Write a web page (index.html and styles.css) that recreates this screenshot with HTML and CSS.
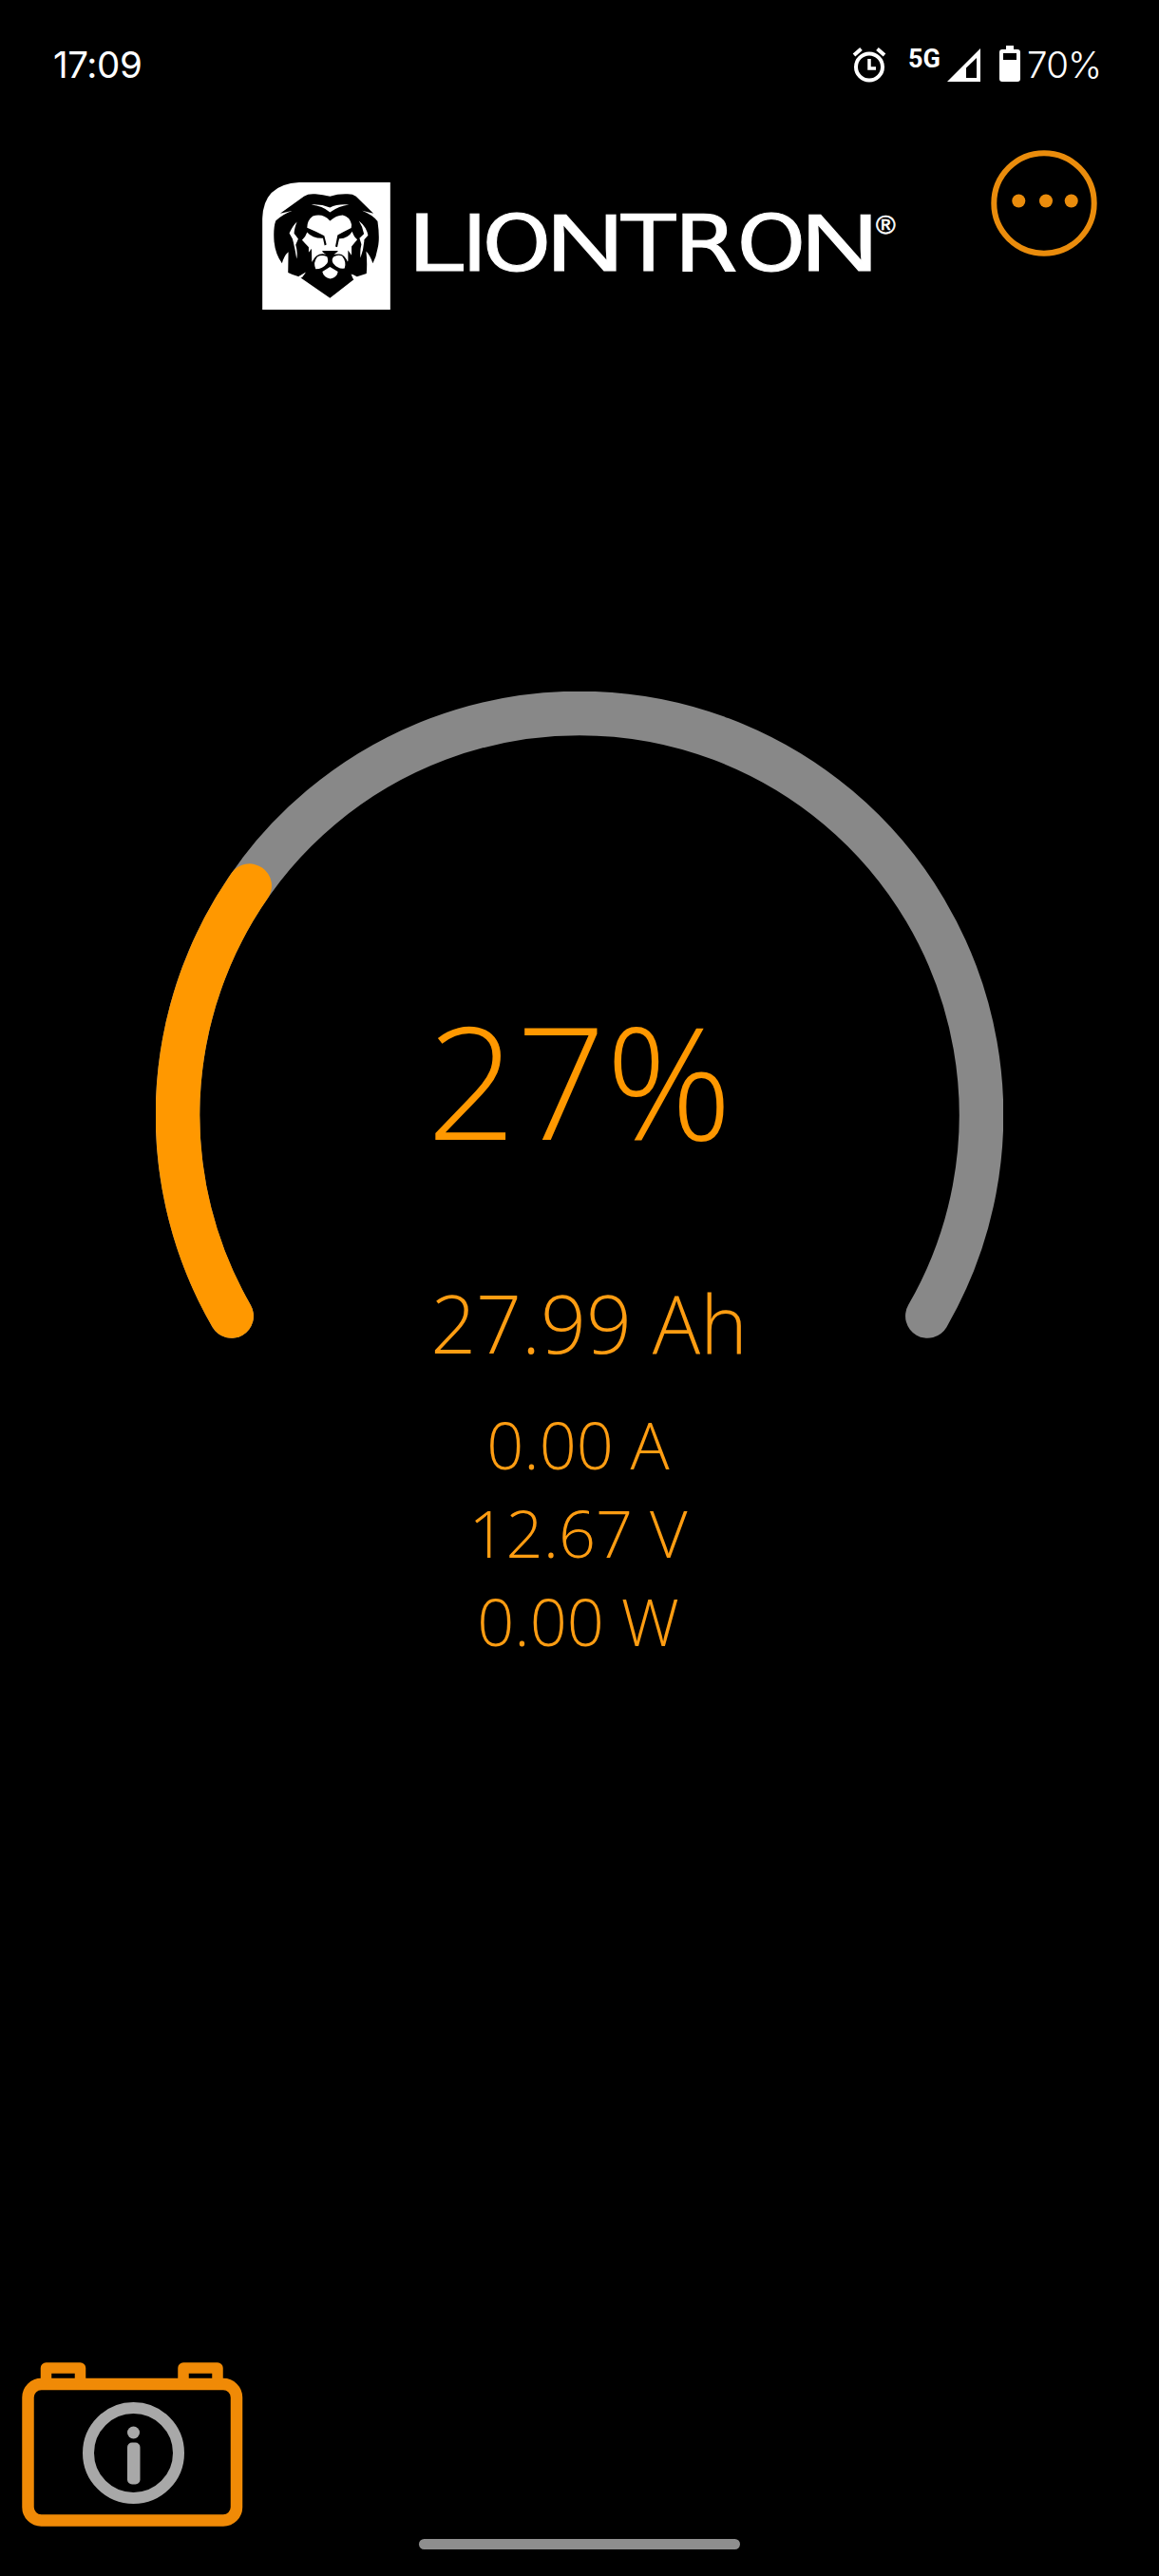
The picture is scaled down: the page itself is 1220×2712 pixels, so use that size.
FILE: index.html
```html
<!DOCTYPE html>
<html lang="en">
<head>
    <meta charset="UTF-8">
    <title>LIONTRON</title>
    <link rel="stylesheet" href="styles.css">
</head>
<body>
<div class="app">
    <div class="status">
        <span class="time">17:09</span>
        <div class="status-icons">
            <svg class="alarm" width="36" height="38" viewBox="0 0 36 38">
                <circle cx="18" cy="21.5" r="14" fill="none" stroke="#fff" stroke-width="4"/>
                <path d="M2 9L9.5 2.500M34 9L26.500 2.500" stroke="#fff" stroke-width="4"/>
                <path d="M18 13v10h7" fill="none" stroke="#fff" stroke-width="3.500"/>
            </svg>
            <span class="net">5G</span>
            <svg class="signal" width="35" height="35" viewBox="0 0 35 35">
                <path d="M35 0V35H0z" fill="#fff"/>
                <path d="M31 10V31H20V20.500z" fill="#000"/>
            </svg>
            <svg class="battery" width="22" height="38" viewBox="0 0 22 38">
                <path d="M7 0h8v4h4q3 0 3 3v28q0 3-3 3H3q-3 0-3-3V7q0-3 3-3h4z" fill="#fff"/>
                <path d="M4 8h14v7H4z" fill="#000"/>
            </svg>
            <span class="level">70%</span>
        </div>
    </div>

    <div class="header">
        <svg class="lion" width="135" height="134" viewBox="49 36 403 401">
            <path d="M49 437V150Q52 42 165 36H452V437z" fill="#fff"/>
            <!-- mane -->
            <path d="M105 134L180 80Q194 71 216 73Q240 75 262 80Q285 73 310 73Q332 71 344 80L399 134L363 125Q398 139 412 159Q420 215 412 245Q408 270 397 291Q389 267 376 253Q380 289 377 323L347 333L331 325L337 342L262 400L170 337L185 321L164 333Q146 328 130 320L131 255Q117 267 111 291Q90 262 86 222Q83 180 91 157Q113 137 142 126z" fill="#000"/>
            <!-- forehead and mane highlights -->
            <path d="M203 106Q235 104 262 115Q285 103 322 106Q291 109 262 130Q238 109 203 106z" fill="#fff"/>
            <path d="M158 160Q149 183 149 197L162 214L154 233Q161 255 157 277Q151 240 144 214L134 196Q145 172 158 160z" fill="#fff"/>
            <path d="M353 157Q377 176 382 203L370 216Q369 244 358 274Q356 250 361 231L355 212L369 198Q366 177 353 157z" fill="#fff"/>
            <path d="M161 334L186 319L174 336zM328 325L345 337L336 342z" fill="#fff"/>
            <!-- face -->
            <path d="M262 157Q282 139 302 139Q324 143 330 169L329 180Q307 191 286 202L279 238L285 240L291 213Q318 214 332 191Q337 208 348 216L330 238V266L319 250V289Q307 261 290 262L272 263Q293 251 286 252H239Q232 253 251 263Q220 254 205 288L204 245L195 257V240L174 218Q185 208 190 193Q207 213 240 212L245 235L251 232L244 204Q218 191 190 179Q190 155 208 142Q240 132 262 157z" fill="#fff"/>
            <path d="M239 252H286Q277 262 269 267V289Q288 306 303 306Q311 290 324 279L329 302L314 324L202 320L196 300L204 288L219 270Q213 295 224 306Q244 307 258 288V267Q244 261 239 252z" fill="#000"/>
            <path d="M222 271Q235 263 253 270Q258 283 253 291Q239 309 217 309Q208 288 222 271zM274 270Q287 262 300 268Q315 287 308 307Q287 310 272 291Q265 279 274 270z" fill="#fff"/>
            <path d="M238 317L262 302L287 317Q285 334 263 340Q242 335 238 317z" fill="#fff"/>
        </svg>
        <div class="wordmark"><span class="l">L</span><span class="i">I</span><span class="o">O</span><span class="n">N</span><span class="t">T</span><span class="r">R</span><span class="o">O</span><span class="n">N</span><span class="reg">®</span></div>
        <svg class="menu" width="112" height="112" viewBox="0 0 112 112">
            <circle cx="56" cy="56" r="52.700" fill="none" stroke="#ea8c0c" stroke-width="6"/>
            <circle cx="29.300" cy="53.500" r="7" fill="#ea8c0c"/>
            <circle cx="58" cy="53.500" r="7" fill="#ea8c0c"/>
            <circle cx="84.700" cy="53.500" r="7" fill="#ea8c0c"/>
        </svg>
    </div>

    <div class="gauge">
        <svg class="dial" width="892" height="682" viewBox="164 728 892 682">
            <path d="M243.700 1385.500A423 423 0 1 1 976.300 1385.500" fill="none" stroke="#888" stroke-width="46.500" stroke-linecap="round"/>
            <path d="M243.700 1385.500A423 423 0 0 1 262.700 932.600" fill="none" stroke="#ff9800" stroke-width="46.500" stroke-linecap="round"/>
        </svg>
        <div class="values">
            <div class="percent">27%</div>
            <div class="capacity">27.99 Ah</div>
            <div class="value">0.00 A</div>
            <div class="value">12.67 V</div>
            <div class="value">0.00 W</div>
        </div>
    </div>

    <div class="footer">
        <svg class="info" width="234" height="175" viewBox="22 2486 234 175">
            <path d="M48.500 2508V2493H84.500V2508M193 2508V2493H229V2508" fill="none" stroke="#f08a06" stroke-width="11.500" stroke-linejoin="round"/>
            <rect x="29.500" y="2510" width="219.500" height="143.500" rx="14" fill="none" stroke="#f08a06" stroke-width="12.500"/>
            <circle cx="140.500" cy="2582.500" r="47.500" fill="none" stroke="#a8a8a8" stroke-width="12"/>
            <circle cx="140.500" cy="2561" r="6.500" fill="#a8a8a8"/>
            <rect x="134" y="2571.500" width="13.500" height="44" rx="5" fill="#a8a8a8"/>
        </svg>
    </div>
    <div class="home"></div>
</div>
</body>
</html>
```

FILE: styles.css
```css
* {
    margin: 0;
    padding: 0;
    box-sizing: border-box;
}

body {
    background-color: #000;
}

svg {
    display: block;
    flex-shrink: 0;
}

.app {
    width: 1220px;
    height: 2712px;
    display: flex;
    flex-direction: column;
    background-color: #000;
    color: #ff9d12;
    font-family: "Open Sans", sans-serif;
    overflow: hidden;
}

.status {
    height: 136px;
    padding: 0 58px 0 56px;
    display: flex;
    justify-content: space-between;
    align-items: center;
    color: #fff;
    font-family: Inter, sans-serif;
    font-size: 38.5px;
    line-height: 46px;
}

.time {
    letter-spacing: -0.4px;
}

.status-icons {
    display: flex;
    align-items: center;
}

.net {
    margin: -13px 8px 0 23px;
    width: 33px;
    font-family: Roboto, sans-serif;
    font-size: 27px;
    font-weight: 700;
    line-height: 26px;
}

.battery {
    margin: -2px 7px 0 20px;
}

.level {
    width: 81px;
    font-weight: 350;
    letter-spacing: -0.8px;
}

.header {
    height: 170px;
    padding: 22px 65px 0 276px;
    display: flex;
    align-items: flex-start;
}

.lion {
    margin-top: 34px;
}

.wordmark {
    display: flex;
    align-items: baseline;
    margin: 45px 0 0 28px;
    color: #fff;
    font-family: "DejaVu Sans", sans-serif;
    font-size: 82px;
    line-height: 99px;
    -webkit-text-stroke: 1px #fff;
}

/* every letter is stretched to the wide shape of the logo */
.wordmark span {
    white-space: nowrap;
    letter-spacing: -12px;
    transform-origin: 0 50%;
}

.wordmark .l {
    width: 56px;
    text-indent: -8px;
    transform: scaleX(1.3);
}

.wordmark .i {
    width: 18px;
    text-indent: -8px;
    transform: scaleX(1.1);
}

.wordmark .o {
    width: 70.5px;
    text-indent: -4.6px;
    transform: scaleX(1.12);
}

.wordmark .n {
    width: 70.5px;
    font-family: "Noto Sans", sans-serif;
    font-size: 83px;
    text-indent: -8.1px;
    transform: scaleX(1.36);
}

.wordmark .t {
    width: 65px;
    transform: scaleX(1.14);
}

.wordmark .r {
    width: 62px;
    text-indent: -8px;
    transform: scaleX(1.18);
}

.wordmark .reg {
    width: 24px;
    align-self: flex-start;
    font-family: "Liberation Sans", sans-serif;
    font-size: 28px;
    letter-spacing: 0;
    line-height: 68px;
    -webkit-text-stroke-width: 0.6px;
}

.menu {
    margin-left: auto;
}

.gauge {
    display: grid;
    justify-items: center;
    align-items: start;
    margin-top: 422px;
}

.dial,
.values {
    grid-area: 1 / 1;
}

.values {
    padding-top: 296px;
    text-align: center;
    font-weight: 300;
}

.percent {
    height: 225px;
    color: #ff9800;
    font-size: 165px;
    line-height: 225px;
}

.capacity {
    height: 114px;
    margin: 87px 0 24px;
    padding-left: 20px;
    font-size: 84px;
    line-height: 114px;
}

.value {
    height: 93px;
    padding-right: 3px;
    font-size: 68.5px;
    line-height: 93px;
}

.footer {
    margin-top: auto;
    padding: 0 0 12px 22px;
}

.home {
    width: 338px;
    height: 11px;
    flex-shrink: 0;
    margin: 0 auto 28px;
    border-radius: 6px;
    background-color: #8e8e8e;
}
```
